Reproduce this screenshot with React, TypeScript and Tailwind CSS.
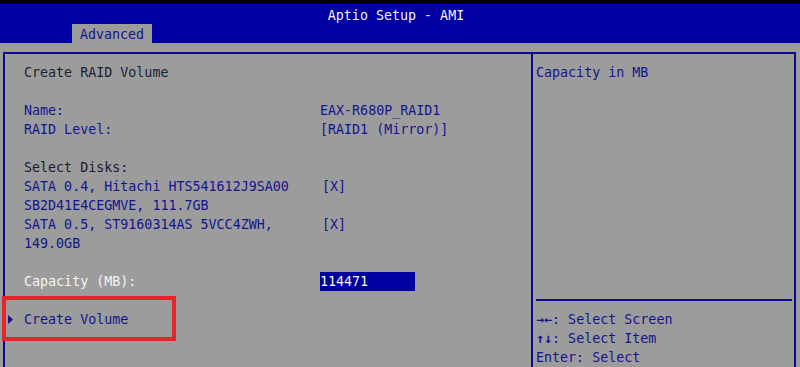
import React from "react";

const mono = { fontFamily: '"DejaVu Sans Mono", "Liberation Mono", monospace' };

function Row({ label, value, labelClass = "text-[#14148c]", valueClass = "text-[#14148c]" }: { label?: string; value?: React.ReactNode; labelClass?: string; valueClass?: string }) {
  return (
    <div className="grid grid-cols-[296px_1fr] h-[19px] items-center">
      <span className={labelClass + " whitespace-pre"}>{label ?? ""}</span>
      <span className={valueClass + " whitespace-pre"}>{value ?? ""}</span>
    </div>
  );
}

export default function App() {
  return (
    <div className="relative w-[800px] h-[367px] overflow-hidden bg-[#9c9c9c] flex flex-col text-[13.33px] leading-[19px]" style={mono}>
      <div className="h-[4px] bg-black shrink-0" />
      <div className="h-[39px] bg-[#0000a0] shrink-0 flex flex-col">
        <div className="h-[20px] flex items-center justify-center pr-[8px] pt-[2px] text-[#f0f0f0]">Aptio Setup - AMI</div>
        <div className="flex-1 flex pl-[72px]">
          <div className="w-[80px] bg-[#9c9c9c] text-[#14148c] flex items-center justify-center pt-[1px]">Advanced</div>
        </div>
      </div>
      <div className="pt-[9px] pl-[3px] flex shrink-0">
        <div className="flex h-[340px]">
          <div className="w-[530px] border-l-2 border-t-2 border-r-2 border-[#0a0a8c] pt-[9px] pl-[19px] flex flex-col">
            <Row label="Create RAID Volume" labelClass="text-[#1c1c2c]" />
            <Row />
            <Row label="Name:" value="EAX-R680P_RAID1" />
            <Row label="RAID Level:" value="[RAID1 (Mirror)]" />
            <Row />
            <Row label="Select Disks:" labelClass="text-[#1c1c2c]" />
            <Row label="SATA 0.4, Hitachi HTS541612J9SA00" value="[X]" valueClass="text-[#14148c] pl-[2px]" />
            <Row label="SB2D41E4CEGMVE, 111.7GB" />
            <Row label="SATA 0.5, ST9160314AS 5VCC4ZWH," value="[X]" valueClass="text-[#14148c] pl-[2px]" />
            <Row label="149.0GB" />
            <Row />
            <div className="grid grid-cols-[296px_1fr] h-[19px] items-center">
              <span className="text-[#f4f4f4]">Capacity (MB):</span>
              <span className="w-[95px] h-[19px] bg-[#0000a0] text-[#f4f4f4] flex items-center">114471</span>
            </div>
            <Row />
            <div className="flex h-[19px] items-center ml-[-19px]">
              <span className="w-[19px] pl-[3px] flex items-center">
                <svg width="5" height="9" viewBox="0 0 5 9"><path d="M0 0 L5 4.5 L0 9 Z" fill="#14148c" /></svg>
              </span>
              <span className="text-[#14148c]">Create Volume</span>
            </div>
          </div>
          <div className="w-[263px] border-t-2 border-r-2 border-[#0a0a8c] pt-[9px] pl-[3px] pr-[2px] flex flex-col text-[#14148c]">
            <div className="h-[19px] flex items-center">Capacity in MB</div>
            <div className="flex-1" />
            <div className="h-[2px] bg-[#0a0a8c] mb-[9px]" />
            <div className="h-[19px] flex items-center"><span className="font-bold">→←</span>: Select Screen</div>
            <div className="h-[19px] flex items-center"><span className="font-bold">↑↓</span>: Select Item</div>
            <div className="h-[19px] flex items-center">Enter: Select</div>
            <div className="h-[6px]" />
            <div className="h-[19px]" />
          </div>
        </div>
      </div>
      <div className="absolute left-[2px] top-[296px] w-[174px] h-[45px] border-[4px] border-[#e5242b]" />
    </div>
  );
}
